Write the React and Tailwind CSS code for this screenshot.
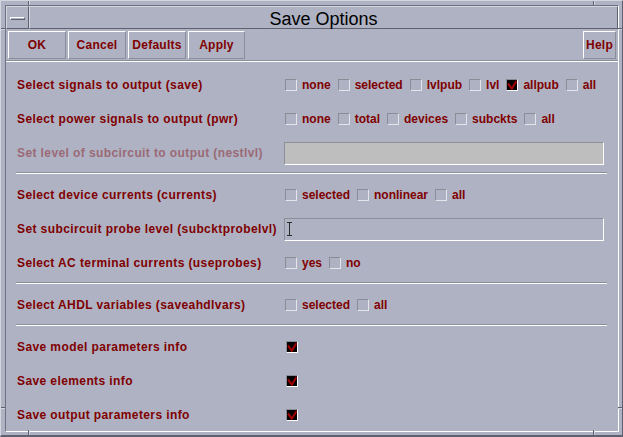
import React from "react";

function Box({ checked }) {
  if (checked) {
    return (
      <span className="block w-[12px] h-[12px] shrink-0 bg-black border border-t-[#8a8c96] border-l-[#8a8c96] border-b-white border-r-white">
        <svg width="10" height="10" viewBox="0 0 10 10" className="block">
          <path d="M1 3.5 L4.8 8.6 L9.6 1" stroke="#a00000" strokeWidth="2.1" fill="none" />
        </svg>
      </span>
    );
  }
  return (
    <span className="block w-[12px] h-[12px] shrink-0 border border-t-[#8a8c96] border-l-[#8a8c96] border-b-[#e4e5ec] border-r-[#e4e5ec]" />
  );
}

function Opt({ label, checked }) {
  return (
    <span className="flex items-center tracking-normal">
      <Box checked={checked} />
      <span className="ml-[5px] mr-[7px]">{label}</span>
    </span>
  );
}

function Row({ label, disabled, children }) {
  return (
    <div className="flex items-center h-[34px] pl-[11px] shrink-0">
      <div className={"w-[268px] shrink-0 whitespace-nowrap tracking-[0.4px] " + (disabled ? "text-[#9b6a76]" : "")}>{label}</div>
      <div className="flex items-center">{children}</div>
    </div>
  );
}

function Sep() {
  return <div className="ml-[10px] w-[591px] h-[2px] mt-[2px] mb-[4px] shrink-0 border-t border-b border-t-[#8b8d98] border-b-white" />;
}

function Btn({ children, w }) {
  return (
    <div
      className={
        "h-[28px] flex items-center justify-center border border-t-white border-l-white border-b-[#8b8d98] border-r-[#8b8d98] " + w
      }
    >
      {children}
    </div>
  );
}

export default function App() {
  return (
    <div className="relative w-[623px] h-[437px] bg-[#aeb2c3] border-t border-l border-t-[#d4d6df] border-l-[#d4d6df] border-b-2 border-r border-b-[#5f626e] border-r-[#5f626e] pl-[4px] pt-[4px] pr-[3px] pb-[3px] font-['Liberation_Sans',Arial,sans-serif] font-bold text-[12px] tracking-[0.25px] text-[#800000] overflow-hidden">
      {/* frame corner notches */}
      <div className="absolute left-[27px] top-0 w-[2px] h-[4px] border-l border-r border-l-[#5f626e] border-r-[#d4d6df]" />
      <div className="absolute left-[592px] top-0 w-[2px] h-[4px] border-l border-r border-l-[#5f626e] border-r-[#d4d6df]" />
      <div className="absolute left-[27px] bottom-0 w-[2px] h-[5px] border-l border-r border-l-[#5f626e] border-r-[#d4d6df]" />
      <div className="absolute left-[592px] bottom-0 w-[2px] h-[5px] border-l border-r border-l-[#5f626e] border-r-[#d4d6df]" />
      <div className="absolute left-0 top-[27px] w-[4px] h-[2px] border-t border-b border-t-[#5f626e] border-b-[#d4d6df]" />
      <div className="absolute right-0 top-[27px] w-[4px] h-[2px] border-t border-b border-t-[#5f626e] border-b-[#d4d6df]" />
      <div className="absolute left-0 top-[406px] w-[4px] h-[2px] border-t border-b border-t-[#5f626e] border-b-[#d4d6df]" />
      <div className="absolute right-0 top-[406px] w-[4px] h-[2px] border-t border-b border-t-[#5f626e] border-b-[#d4d6df]" />

      <div className="h-full flex flex-col border border-t-[#6e7180] border-l-[#6e7180] border-b-white border-r-white">
        {/* title row */}
        <div className="flex h-[23px] shrink-0">
          <div className="w-[23px] h-full flex items-center justify-center border border-t-[#d4d6df] border-l-[#d4d6df] border-b-[#5f626e] border-r-[#5f626e]">
            <div className="w-[15px] h-[3px] mt-[1px] border border-t-white border-l-white border-b-[#5f626e] border-r-[#5f626e]" />
          </div>
          <div className="flex-1 h-full flex items-center justify-center border border-t-[#d4d6df] border-l-[#d4d6df] border-b-[#5f626e] border-r-[#5f626e] font-normal text-black text-[18px] tracking-normal leading-none pt-[3px]">
            Save Options
          </div>
        </div>

        {/* button bar */}
        <div className="flex items-start pt-[2px] px-[2px] h-[31px] shrink-0">
          <div className="flex gap-[2px]">
            <Btn w="w-[58px]">OK</Btn>
            <Btn w="w-[58px]">Cancel</Btn>
            <Btn w="w-[58px]">Defaults</Btn>
            <Btn w="w-[57px]">Apply</Btn>
          </div>
          <div className="ml-auto">
            <Btn w="w-[33px]">Help</Btn>
          </div>
        </div>
        <div className="h-[2px] shrink-0 border-t border-b border-t-[#8b8d98] border-b-white" />

        {/* content */}
        <div className="flex flex-col pt-[6px] overflow-hidden">
          <Row label="Select signals to output (save)">
            <Opt label="none" />
            <Opt label="selected" />
            <Opt label="lvlpub" />
            <Opt label="lvl" />
            <Opt label="allpub" checked />
            <Opt label="all" />
          </Row>
          <Row label="Select power signals to output (pwr)">
            <Opt label="none" />
            <Opt label="total" />
            <Opt label="devices" />
            <Opt label="subckts" />
            <Opt label="all" />
          </Row>
          <Row label="Set level of subcircuit to output (nestlvl)" disabled>
            <div className="-ml-[1px] w-[320px] h-[23px] bg-[#bebebe] border border-t-[#8c8e98] border-l-[#8c8e98] border-b-white border-r-white" />
          </Row>
          <Sep />
          <Row label="Select device currents (currents)">
            <Opt label="selected" />
            <Opt label="nonlinear" />
            <Opt label="all" />
          </Row>
          <Row label="Set subcircuit probe level (subcktprobelvl)">
            <div className="-ml-[1px] w-[320px] h-[23px] flex items-center pl-[1px] border border-t-[#8c8e98] border-l-[#8c8e98] border-b-white border-r-white">
              <svg width="7" height="14" viewBox="0 0 7 14" className="block">
                <path d="M1 0.5 H6 M3.5 0.5 V13.5 M1 13.5 H6" stroke="#2a2a2a" strokeWidth="1" fill="none" />
              </svg>
            </div>
          </Row>
          <Row label="Select AC terminal currents (useprobes)">
            <Opt label="yes" />
            <Opt label="no" />
          </Row>
          <Sep />
          <Row label="Select AHDL variables (saveahdlvars)">
            <Opt label="selected" />
            <Opt label="all" />
          </Row>
          <Sep />
          <Row label="Save model parameters info">
            <span className="ml-[1px]"><Box checked /></span>
          </Row>
          <Row label="Save elements info">
            <span className="ml-[1px]"><Box checked /></span>
          </Row>
          <Row label="Save output parameters info">
            <span className="ml-[1px]"><Box checked /></span>
          </Row>
        </div>
      </div>
    </div>
  );
}
